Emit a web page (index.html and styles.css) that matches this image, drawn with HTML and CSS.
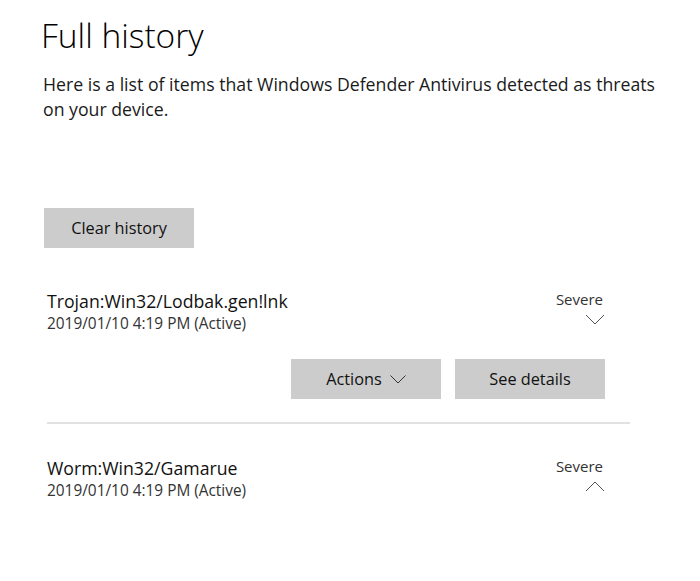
FILE: index.html
```html
<!DOCTYPE html>
<html lang="en">
<head>
<meta charset="utf-8">
<title>Full history</title>
<link rel="stylesheet" href="styles.css">
</head>
<body>
<main class="page">
  <h1 class="title">Full history</h1>
  <p class="desc">Here is a list of items that Windows Defender Antivirus detected as threats on your device.</p>
  <button class="btn btn-clear">Clear history</button>
  <section class="list">
    <div class="item item-open">
      <div class="row">
        <div class="info">
          <div class="name">Trojan:Win32/Lodbak.gen!lnk</div>
          <div class="date">2019/01/10 4:19 PM (Active)</div>
        </div>
        <div class="sev">
          <div class="sev-label">Severe</div>
          <svg class="chev" width="20" height="11" viewBox="0 0 20 11"><path d="M1 1 L10 10 L19 1" fill="none" stroke="#555" stroke-width="1"/></svg>
        </div>
      </div>
      <div class="actions">
        <button class="btn btn-act">Actions <svg class="chev-sm" width="16" height="9" viewBox="0 0 16 9"><path d="M0.5 0.5 L8 8 L15.5 0.5" fill="none" stroke="#333" stroke-width="1"/></svg></button>
        <button class="btn btn-act">See details</button>
      </div>
    </div>
    <div class="item">
      <div class="row">
        <div class="info">
          <div class="name">Worm:Win32/Gamarue</div>
          <div class="date">2019/01/10 4:19 PM (Active)</div>
        </div>
        <div class="sev">
          <div class="sev-label">Severe</div>
          <svg class="chev" width="20" height="11" viewBox="0 0 20 11"><path d="M1 10 L10 1 L19 10" fill="none" stroke="#555" stroke-width="1"/></svg>
        </div>
      </div>
    </div>
  </section>
</main>
</body>
</html>
```
FILE: styles.css
```css
html, body {
  margin: 0;
  padding: 0;
  background: #ffffff;
}
body {
  font-family: "Open Sans", "Noto Sans", sans-serif;
  color: #000;
}
.page {
  padding: 12px 0 0 41px;
  width: 622px;
}
.title {
  font-weight: 300;
  font-size: 33.5px;
  line-height: 46px;
  margin: 0;
  color: #000;
}
.desc {
  font-size: 17.7px;
  line-height: 25px;
  margin: 14px 0 0 2px;
  color: #1a1a1a;
  width: 622px;
}
.btn {
  font-family: inherit;
  background: #cccccc;
  border: none;
  color: #111;
  font-size: 16.3px;
  height: 40px;
  width: 150px;
  padding: 0;
  display: inline-flex;
  align-items: center;
  justify-content: center;
  gap: 8px;
}
.btn-clear {
  margin: 86px 0 0 3px;
}
.list {
  margin: 40px 0 0 6px;
  width: 583px;
}
.item {
  padding-right: 25px;
}
.item-open {
  border-bottom: 2px solid #e1e1e1;
  padding-bottom: 23px;
}
.row {
  display: flex;
  justify-content: space-between;
  align-items: flex-start;
}
.name {
  font-size: 17.7px;
  line-height: 26px;
  color: #111;
}
.date {
  font-size: 15.4px;
  line-height: 20px;
  color: #333;
}
.sev {
  display: flex;
  flex-direction: column;
  align-items: flex-end;
  padding-top: 1px;
}
.sev-label {
  font-size: 15px;
  line-height: 20px;
  color: #333;
  margin-right: 2px;
}
.chev {
  margin-top: 5px;
}
.actions {
  display: flex;
  justify-content: flex-end;
  gap: 14px;
  margin-top: 25px;
}
.item + .item {
  padding-top: 31px;
}
```
